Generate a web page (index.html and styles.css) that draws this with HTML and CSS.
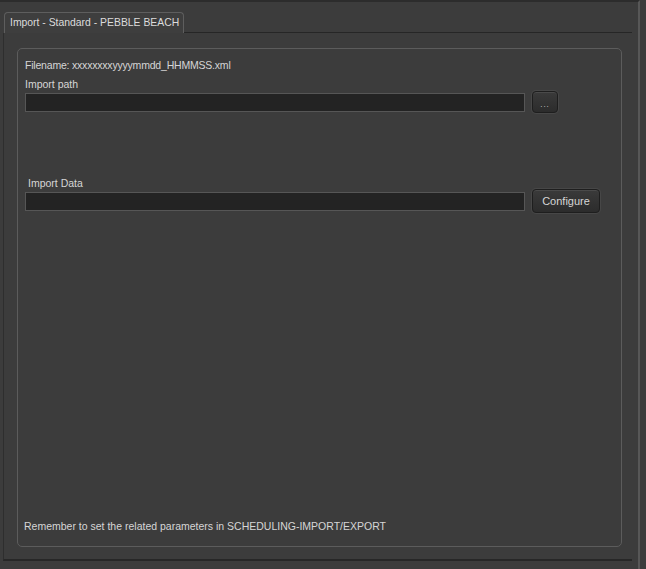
FILE: index.html
```html
<!DOCTYPE html>
<html>
<head>
<meta charset="utf-8">
<link rel="stylesheet" href="styles.css">
</head>
<body>
<div class="window">
  <div class="tabbar">
    <div class="tab">Import - Standard - PEBBLE BEACH</div>
    <div class="tab-fill"></div>
  </div>
  <div class="pane">
    <div class="group">
      <div class="label label-first">Filename: xxxxxxxxyyyymmdd_HHMMSS.xml</div>
      <div class="label">Import path</div>
      <div class="row">
        <div class="input"></div>
        <button class="btn btn-dots">...</button>
      </div>
      <div class="label label-indent">Import Data</div>
      <div class="row">
        <div class="input"></div>
        <button class="btn btn-config">Configure</button>
      </div>
      <div class="note">Remember to set the related parameters in SCHEDULING-IMPORT/EXPORT</div>
    </div>
  </div>
</div>
</body>
</html>
```
FILE: styles.css
```css
html, body {
  margin: 0;
  padding: 0;
  background: #3c3c3c;
}
body {
  width: 646px;
  height: 569px;
  overflow: hidden;
  font-family: "Liberation Sans", Arial, sans-serif;
  font-size: 10.5px;
  color: #d6d6d6;
}
.window {
  width: 640px;
  height: 569px;
  box-sizing: border-box;
  border-top: 2px solid #2c2c2c;
  border-right: 2px solid #575757;
  padding-top: 10px;
}
.tabbar {
  display: flex;
  align-items: flex-end;
  padding-left: 4px;
  width: 632px;
  box-sizing: border-box;
}
.tab {
  height: 20px;
  line-height: 19px;
  padding: 0 4px 0 5px;
  border: 1px solid #5e5e5e;
  border-bottom: none;
  border-radius: 4px 4px 0 0;
  background: #3e3e3e;
  color: #dcdcdc;
  font-size: 10.4px;
  white-space: nowrap;
}
.tab-fill {
  flex: 1;
  border-bottom: 1px solid #262626;
}
.pane {
  width: 629px;
  height: 528px;
  margin-left: 3px;
  box-sizing: border-box;
  border-left: 1px solid #2e2e2e;
  border-bottom: 2px solid #272727;
  padding: 15px 0 0 13px;
}
.group {
  width: 605px;
  height: 499px;
  box-sizing: border-box;
  border: 1px solid #5c5c5c;
  border-radius: 5px;
  padding: 9px 0 0 7px;
  display: flex;
  flex-direction: column;
}
.label {
  height: 15px;
  line-height: 14px;
  white-space: nowrap;
}
.label-first {
  height: 19px;
  letter-spacing: -0.2px;
}
.label-indent {
  padding-left: 3px;
  margin-top: 64px;
  height: 15px;
}
.row {
  display: flex;
  align-items: center;
  gap: 7px;
  height: 20px;
}
.input {
  width: 500px;
  height: 19px;
  box-sizing: border-box;
  background: #232323;
  border: 1px solid #565656;
}
.btn {
  box-sizing: border-box;
  border: 1px solid #1e1e1e;
  border-radius: 4px;
  background: linear-gradient(#3a3a3a, #2c2c2c);
  box-shadow: inset 0 1px 0 #4a4a4a, 0 0 0 1px #474747;
  color: #d6d6d6;
  font-family: "Liberation Sans", Arial, sans-serif;
  font-size: 10.5px;
  padding: 0;
}
.btn-dots {
  width: 26px;
  height: 22px;
  line-height: 26px;
  font-size: 8px;
  letter-spacing: 1px;
}
.btn-config {
  width: 68px;
  height: 24px;
  font-size: 11px;
}
.note {
  margin-top: auto;
  margin-bottom: 13px;
  margin-left: -1px;
  line-height: 14px;
  white-space: nowrap;
}
```
